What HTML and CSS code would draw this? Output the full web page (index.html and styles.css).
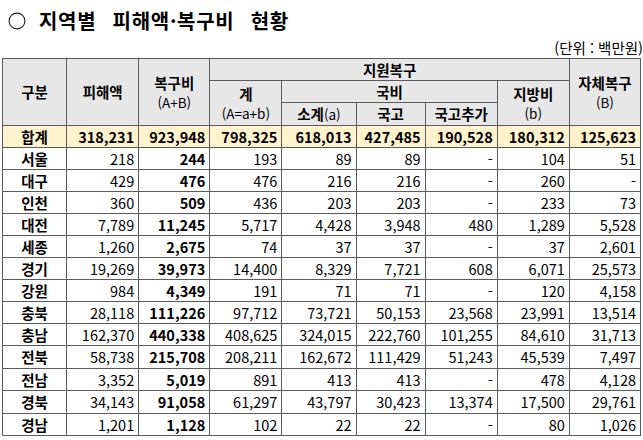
FILE: index.html
```html
<!DOCTYPE html>
<html lang="ko">
<head>
<meta charset="utf-8">
<link rel="stylesheet" href="styles.css">
</head>
<body>
<div class="page">
  <h1 class="title">
    <svg class="bullet" width="18" height="18" viewBox="0 0 18 18"><circle cx="9" cy="9" r="7.9" fill="none" stroke="#222" stroke-width="1.1"/></svg>
    <span class="title-text">지역별 피해액·복구비 현황</span>
  </h1>
  <div class="unit">(단위 : 백만원)</div>
  <table class="grid">
    <colgroup>
      <col class="c1"><col class="c2"><col class="c3"><col class="c4"><col class="c5"><col class="c6"><col class="c7"><col class="c8"><col class="c9">
    </colgroup>
    <thead>
      <tr class="h1">
        <th rowspan="3">구분</th>
        <th rowspan="3">피해액</th>
        <th rowspan="3"><span class="main">복구비</span><span class="sub">(A+B)</span></th>
        <th colspan="5">지원복구</th>
        <th rowspan="3"><span class="main">자체복구</span><span class="sub">(B)</span></th>
      </tr>
      <tr class="h2">
        <th rowspan="2"><span class="main">계</span><span class="sub">(A=a+b)</span></th>
        <th colspan="3">국비</th>
        <th rowspan="2"><span class="main">지방비</span><span class="sub">(b)</span></th>
      </tr>
      <tr class="h3">
        <th>소계<span class="inl">(a)</span></th>
        <th>국고</th>
        <th>국고추가</th>
      </tr>
    </thead>
    <tbody>
      <tr class="total"><th>합계</th><td>318,231</td><td>923,948</td><td>798,325</td><td>618,013</td><td>427,485</td><td>190,528</td><td>180,312</td><td>125,623</td></tr>
      <tr><th>서울</th><td>218</td><td class="b">244</td><td>193</td><td>89</td><td>89</td><td>-</td><td>104</td><td>51</td></tr>
      <tr><th>대구</th><td>429</td><td class="b">476</td><td>476</td><td>216</td><td>216</td><td>-</td><td>260</td><td>-</td></tr>
      <tr><th>인천</th><td>360</td><td class="b">509</td><td>436</td><td>203</td><td>203</td><td>-</td><td>233</td><td>73</td></tr>
      <tr><th>대전</th><td>7,789</td><td class="b">11,245</td><td>5,717</td><td>4,428</td><td>3,948</td><td>480</td><td>1,289</td><td>5,528</td></tr>
      <tr><th>세종</th><td>1,260</td><td class="b">2,675</td><td>74</td><td>37</td><td>37</td><td>-</td><td>37</td><td>2,601</td></tr>
      <tr><th>경기</th><td>19,269</td><td class="b">39,973</td><td>14,400</td><td>8,329</td><td>7,721</td><td>608</td><td>6,071</td><td>25,573</td></tr>
      <tr><th>강원</th><td>984</td><td class="b">4,349</td><td>191</td><td>71</td><td>71</td><td>-</td><td>120</td><td>4,158</td></tr>
      <tr><th>충북</th><td>28,118</td><td class="b">111,226</td><td>97,712</td><td>73,721</td><td>50,153</td><td>23,568</td><td>23,991</td><td>13,514</td></tr>
      <tr><th>충남</th><td>162,370</td><td class="b">440,338</td><td>408,625</td><td>324,015</td><td>222,760</td><td>101,255</td><td>84,610</td><td>31,713</td></tr>
      <tr class="tall"><th>전북</th><td>58,738</td><td class="b">215,708</td><td>208,211</td><td>162,672</td><td>111,429</td><td>51,243</td><td>45,539</td><td>7,497</td></tr>
      <tr><th>전남</th><td>3,352</td><td class="b">5,019</td><td>891</td><td>413</td><td>413</td><td>-</td><td>478</td><td>4,128</td></tr>
      <tr class="tall"><th>경북</th><td>34,143</td><td class="b">91,058</td><td>61,297</td><td>43,797</td><td>30,423</td><td>13,374</td><td>17,500</td><td>29,761</td></tr>
      <tr><th>경남</th><td>1,201</td><td class="b">1,128</td><td>102</td><td>22</td><td>22</td><td>-</td><td>80</td><td>1,026</td></tr>
    </tbody>
  </table>
</div>
</body>
</html>
```

FILE: styles.css
```css
html, body {
  margin: 0;
  padding: 0;
  background: #fff;
}
.page {
  padding: 8px 2px 0 2px;
  font-family: "Noto Sans CJK KR", "Noto Sans", sans-serif;
  color: #000;
}
.title {
  margin: 0;
  display: flex;
  align-items: center;
  height: 26px;
  font-size: 20px;
  font-weight: 700;
  line-height: 26px;
}
.bullet {
  margin-left: 6px;
  margin-right: 13px;
  flex: none;
}
.title-text {
  word-spacing: 10px;
  letter-spacing: 0.7px;
}
.unit {
  text-align: right;
  font-size: 14.5px;
  line-height: 18px;
  margin-top: 5px;
  height: 19px;
  margin-right: -2px;
}
.grid {
  border-collapse: collapse;
  table-layout: fixed;
  width: 639px;
  font-size: 14.5px;
}
.c1 { width: 64px; }
.c2 { width: 72px; }
.c3 { width: 71px; }
.c4 { width: 72px; }
.c5 { width: 74px; }
.c6 { width: 69px; }
.c7 { width: 72px; }
.c8 { width: 72px; }
.c9 { width: 71px; }
.grid th, .grid td {
  border: 1px solid #5b5b5b;
  padding: 0 4px;
  line-height: 20px;
  white-space: nowrap;
  overflow: hidden;
}
.grid tr { height: 22px; }
.grid tr.h3 { height: 23px; }
.grid tr.tall { height: 23px; }
.grid thead th {
  background: #e7e7e7;
  font-weight: 700;
  text-align: center;
  vertical-align: middle;
  line-height: 18px;
}
.grid .main {
  display: block;
  line-height: 18px;
}
.grid .sub {
  display: block;
  margin-top: 2px;
  font-weight: 400;
  font-size: 13.5px;
  line-height: 17px;
}
.grid .inl {
  font-weight: 400;
  font-size: 13.5px;
}
.grid tbody th {
  font-weight: 700;
  text-align: center;
}
.grid tbody td {
  text-align: right;
  font-weight: 400;
}
.grid tbody td.b {
  font-weight: 700;
}
.grid tr.total th, .grid tr.total td {
  background: #fff2cc;
  font-weight: 700;
}
```
